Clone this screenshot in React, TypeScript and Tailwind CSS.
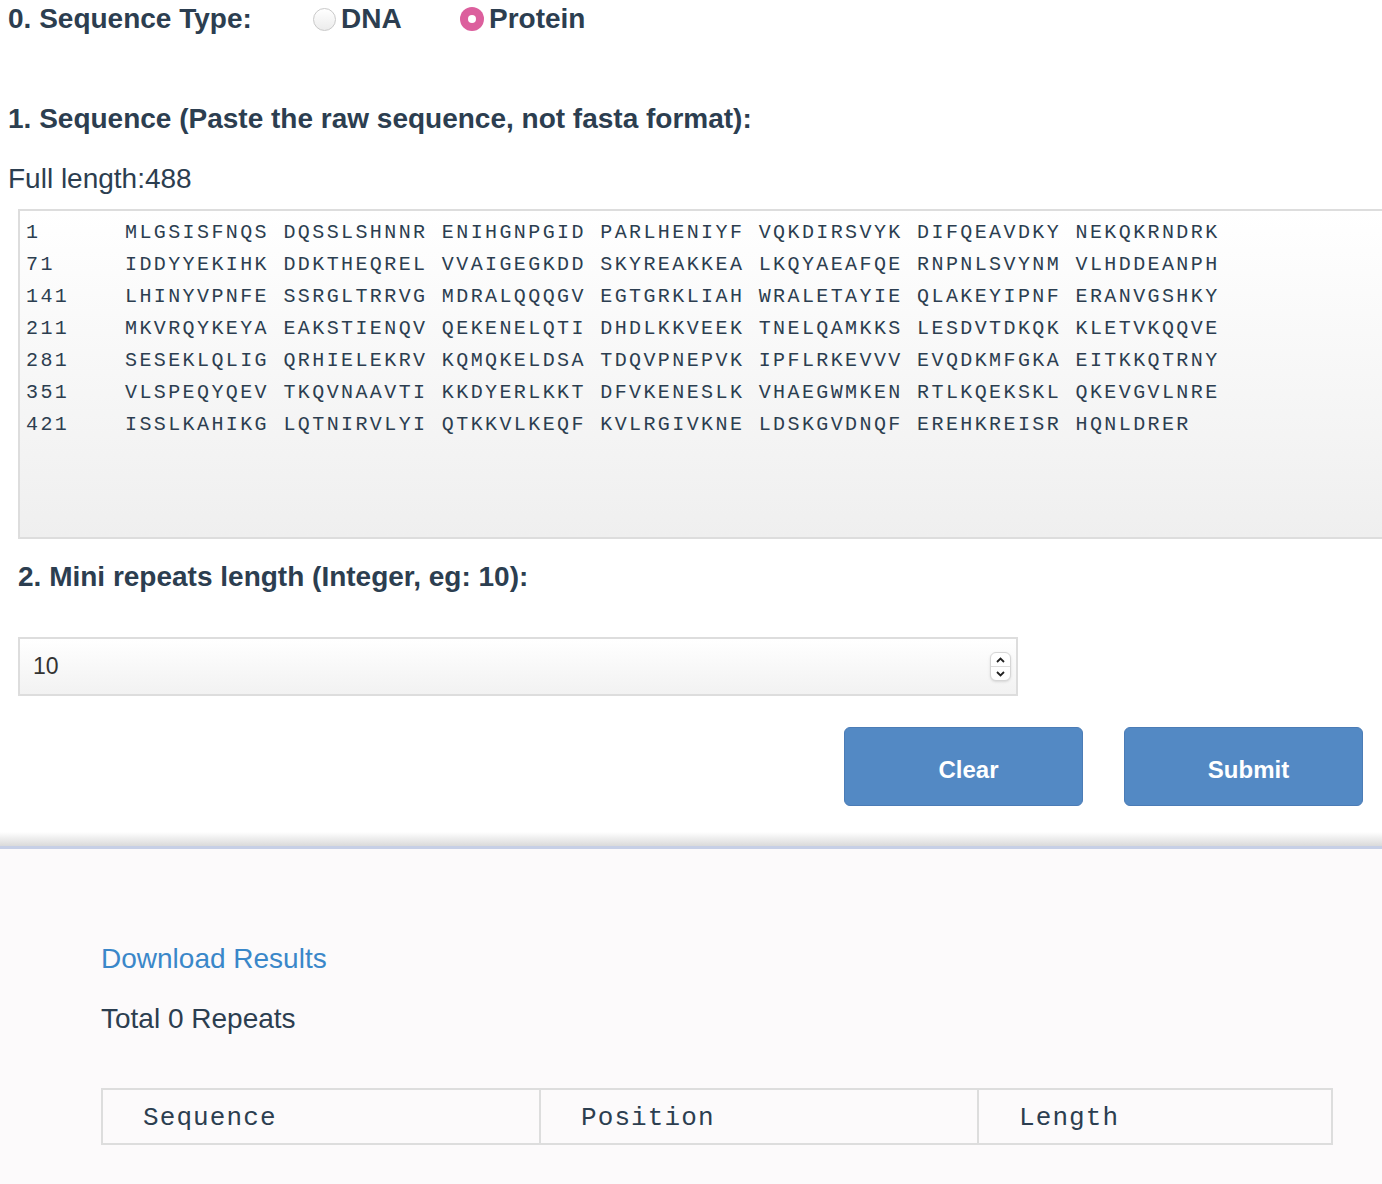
import React from "react";

const rows: [string, string][] = [
  ["1", "MLGSISFNQS DQSSLSHNNR ENIHGNPGID PARLHENIYF VQKDIRSVYK DIFQEAVDKY NEKQKRNDRK"],
  ["71", "IDDYYEKIHK DDKTHEQREL VVAIGEGKDD SKYREAKKEA LKQYAEAFQE RNPNLSVYNM VLHDDEANPH"],
  ["141", "LHINYVPNFE SSRGLTRRVG MDRALQQQGV EGTGRKLIAH WRALETAYIE QLAKEYIPNF ERANVGSHKY"],
  ["211", "MKVRQYKEYA EAKSTIENQV QEKENELQTI DHDLKKVEEK TNELQAMKKS LESDVTDKQK KLETVKQQVE"],
  ["281", "SESEKLQLIG QRHIELEKRV KQMQKELDSA TDQVPNEPVK IPFLRKEVVV EVQDKMFGKA EITKKQTRNY"],
  ["351", "VLSPEQYQEV TKQVNAAVTI KKDYERLKKT DFVKENESLK VHAEGWMKEN RTLKQEKSKL QKEVGVLNRE"],
  ["421", "ISSLKAHIKG LQTNIRVLYI QTKKVLKEQF KVLRGIVKNE LDSKGVDNQF EREHKREISR HQNLDRER"],
];

export default function App() {
  return (
    <div className="w-[1382px] min-h-[1184px] overflow-hidden bg-white text-[#2c3e50] font-['Liberation_Sans',Arial,sans-serif]">
      {/* Top form */}
      <div className="flex flex-col">
        <div className="flex items-center h-[38px] pl-[8px] text-[28px] font-bold leading-[38px]">
          <span className="w-[305px]">0. Sequence Type:</span>
          <span className="flex items-center w-[147px]">
            <span className="w-[23px] h-[23px] rounded-full border border-[#c9c9c9] bg-gradient-to-b from-white to-[#ececec]" />
            <span className="ml-[5px]">DNA</span>
          </span>
          <span className="flex items-center">
            <span className="w-[24px] h-[24px] rounded-full bg-[#dc5f9d] flex items-center justify-center">
              <span className="w-[8px] h-[8px] rounded-full bg-white" />
            </span>
            <span className="ml-[5px]">Protein</span>
          </span>
        </div>

        <div className="mt-[62px] h-[38px] pl-[8px] text-[28px] font-bold leading-[38px]">
          1. Sequence (Paste the raw sequence, not fasta format):
        </div>

        <div className="mt-[22px] h-[38px] pl-[8px] text-[28px] leading-[38px]">
          Full length:488
        </div>

        <div className="mt-[11px] ml-[18px] h-[330px] border-t-2 border-l-2 border-b-2 border-[#dddddd] bg-gradient-to-b from-white to-[#efefef] pt-[6px] pl-[6px]">
          {rows.map(([n, s]) => (
            <div
              key={n}
              className="flex h-[32px] items-center whitespace-pre font-['Liberation_Mono','Courier_New',monospace] text-[20px] tracking-[2.4px] text-[#2c3e50]"
            >
              <span className="w-[99px]">{n}</span>
              <span>{s}</span>
            </div>
          ))}
        </div>

        <div className="mt-[19px] h-[38px] pl-[18px] text-[28px] font-bold leading-[38px]">
          2. Mini repeats length (Integer, eg: 10):
        </div>

        <div className="mt-[41px] ml-[18px] w-[1000px] h-[59px] border-2 border-[#dddddd] bg-gradient-to-b from-white to-[#f2f2f2] flex items-center justify-between pl-[13px] pr-[5px]">
          <span className="text-[23px] text-[#333333]">10</span>
          <span className="flex flex-col w-[21px] h-[29px] rounded-[6px] bg-white border border-[#d6d6d6] shadow-sm">
            <span className="flex-1 flex items-center justify-center border-b border-[#dddddd]">
              <svg width="9" height="6" viewBox="0 0 9 6">
                <path d="M1 5 L4.5 1.5 L8 5" fill="none" stroke="#222" strokeWidth="1.8" />
              </svg>
            </span>
            <span className="flex-1 flex items-center justify-center">
              <svg width="9" height="6" viewBox="0 0 9 6">
                <path d="M1 1 L4.5 4.5 L8 1" fill="none" stroke="#222" strokeWidth="1.8" />
              </svg>
            </span>
          </span>
        </div>

        <div className="mt-[31px] flex justify-end gap-[41px] pr-[19px]">
          <button className="w-[239px] h-[79px] rounded-[6px] bg-[#5389c4] border border-[#4b7cb6] text-white text-[24px] font-bold pt-[7px] pl-[10px]">
            Clear
          </button>
          <button className="w-[239px] h-[79px] rounded-[6px] bg-[#5389c4] border border-[#4b7cb6] text-white text-[24px] font-bold pt-[7px] pl-[10px]">
            Submit
          </button>
        </div>

        <div className="mt-[26px] h-[14px] bg-gradient-to-b from-white to-[#dadada]" />
        <div className="h-[3px] bg-[#c6cfe6]" />
      </div>

      {/* Results */}
      <div className="bg-[#fcfafb] min-h-[337px] pl-[101px] pr-[49px] pt-[91px]">
        <div className="h-[38px] text-[28px] leading-[38px] text-[#3a87c9]">Download Results</div>
        <div className="mt-[22px] h-[38px] text-[28px] leading-[38px] text-[#2c3e50]">Total 0 Repeats</div>
        <div className="mt-[50px] grid grid-cols-[438px_438px_1fr] h-[57px] border-2 border-[#dddddd] font-['Liberation_Mono','Courier_New',monospace] text-[26px] tracking-[1.1px] text-[#2c3e50]">
          <div className="flex items-center pl-[40px] pt-[4px] border-r-2 border-[#dddddd]">Sequence</div>
          <div className="flex items-center pl-[40px] pt-[4px] border-r-2 border-[#dddddd]">Position</div>
          <div className="flex items-center pl-[40px] pt-[4px]">Length</div>
        </div>
      </div>
    </div>
  );
}
